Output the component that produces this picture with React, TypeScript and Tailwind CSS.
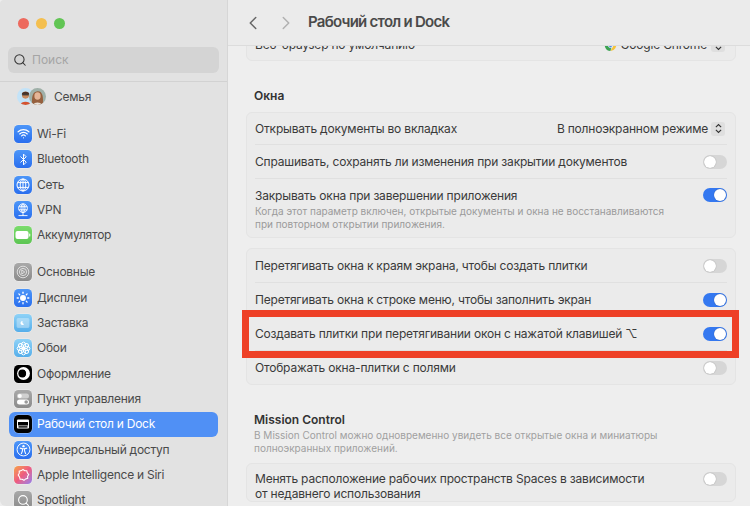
import { FC, ReactNode } from "react";
import { Bluetooth, ChevronLeft, ChevronRight, Search, Sun, Wifi } from "lucide-react";

const font = "font-['Inter','Noto_Sans',sans-serif]";

const Tile: FC<{ className: string; children: ReactNode }> = ({ className, children }) => (
  <div className={`flex h-[18px] w-[18px] shrink-0 items-center justify-center rounded-[4.5px] text-white shadow-[0_0_0_0.5px_rgba(255,255,255,0.45)] ${className}`}>
    {children}
  </div>
);

const blue = "bg-gradient-to-b from-[#4d96f8] to-[#2a6eee]";
const gray = "bg-gradient-to-b from-[#a9a9a9] to-[#8b8b8b]";
const sky = "bg-gradient-to-b from-[#8ed2f7] to-[#55aeea]";

const GlobeIcon = () => (
  <svg viewBox="0 0 14 14" className="h-[14px] w-[14px]" fill="none" stroke="currentColor" strokeWidth="1">
    <circle cx="7" cy="7" r="6" />
    <ellipse cx="7" cy="7" rx="2.8" ry="6" />
    <path d="M1.5 4.6h11M1.5 9.4h11M7 1v12" />
  </svg>
);

const VpnIcon = () => (
  <svg viewBox="0 0 14 14" className="h-[14px] w-[14px]" fill="none" stroke="currentColor" strokeWidth="0.9">
    <circle cx="7" cy="5.2" r="4.4" />
    <ellipse cx="7" cy="5.2" rx="2" ry="4.4" />
    <path d="M2.8 3.7h8.4M2.8 6.8h8.4M7 1v12M2.5 12.6h9" />
  </svg>
);

const BatteryIcon = () => (
  <svg viewBox="0 0 16 10" className="h-[10px] w-[16px]">
    <rect x="0.5" y="1" width="13" height="8" rx="2" fill="#fff" />
    <rect x="14" y="3.5" width="1.3" height="3" rx="0.6" fill="#fff" opacity="0.8" />
  </svg>
);

const GearIcon = () => (
  <svg viewBox="0 0 14 14" className="h-[14px] w-[14px]" fill="none" stroke="#e4e4e4" strokeWidth="0.9">
    <circle cx="7" cy="7" r="5.8" />
    <circle cx="7" cy="7" r="3.6" />
    <path d="M5.8 5l3 2-3 2z" />
  </svg>
);

const ScreensaverIcon = () => (
  <svg viewBox="0 0 14 14" className="h-[14px] w-[14px]" fill="none">
    <rect x="1" y="2.5" width="12" height="9" rx="1" fill="#ffffff" opacity="0.35" stroke="#fff" strokeWidth="0.8" />
    <path d="M6.6 5a2 2 0 1 0 1.6 3.1A2.4 2.4 0 0 1 6.6 5z" fill="#fff" />
  </svg>
);

const FlowerIcon = () => (
  <svg viewBox="0 0 14 14" className="h-[15px] w-[15px]" fill="none" stroke="currentColor" strokeWidth="0.9">
    <ellipse cx="7" cy="3.8" rx="2" ry="2.8" />
    <ellipse cx="7" cy="10.2" rx="2" ry="2.8" />
    <ellipse cx="3.8" cy="7" rx="2.8" ry="2" />
    <ellipse cx="10.2" cy="7" rx="2.8" ry="2" />
    <ellipse cx="4.7" cy="4.7" rx="2" ry="2.6" transform="rotate(-45 4.7 4.7)" />
    <ellipse cx="9.3" cy="9.3" rx="2" ry="2.6" transform="rotate(-45 9.3 9.3)" />
    <ellipse cx="9.3" cy="4.7" rx="2" ry="2.6" transform="rotate(45 9.3 4.7)" />
    <ellipse cx="4.7" cy="9.3" rx="2" ry="2.6" transform="rotate(45 4.7 9.3)" />
  </svg>
);

const AppearanceIcon = () => (
  <svg viewBox="0 0 14 14" className="h-[15px] w-[15px]">
    <circle cx="7" cy="7" r="6" fill="#fff" />
    <circle cx="6" cy="7" r="3.8" fill="#000" />
    <path d="M7.2 2.8c1.6 1.2 2.3 2.600 2.300 4.200s-.7 3-2.300 4.200a4.300 4.300 0 0 0 0-8.400z" fill="#fff" />
  </svg>
);

const ControlIcon = () => (
  <svg viewBox="0 0 14 14" className="h-[14px] w-[14px]">
    <rect x="1" y="1.5" width="12" height="5" rx="2.5" fill="#fff" opacity="0.5" />
    <circle cx="3.8" cy="4" r="2" fill="#fff" />
    <rect x="1" y="7.5" width="12" height="5" rx="2.5" fill="#fff" />
    <circle cx="10.2" cy="10" r="1.8" fill="#9a9a9a" />
  </svg>
);

const DockIcon = () => (
  <svg viewBox="0 0 14 14" className="h-[14px] w-[14px]">
    <rect x="1" y="2.5" width="12" height="9" rx="1" fill="#fff" />
    <rect x="2" y="5" width="10" height="3.5" fill="#000" />
    <rect x="2.5" y="9.2" width="9" height="1.4" fill="#000" />
  </svg>
);

const AccessIcon = () => (
  <svg viewBox="0 0 14 14" className="h-[15px] w-[15px]" fill="none" stroke="currentColor">
    <circle cx="7" cy="7" r="6" strokeWidth="0.9" />
    <circle cx="7" cy="3.9" r="1.1" fill="currentColor" stroke="none" />
    <path d="M3.6 5.700l2.400.6v2L4.900 11.200M10.400 5.700l-2.400.6v2l1.100 2.900M6 6.300h2" strokeWidth="1" />
  </svg>
);

const SiriIcon = () => (
  <svg viewBox="0 0 14 14" className="h-[14px] w-[14px]" fill="none" stroke="#fff" strokeWidth="1.1">
    <path d="M7 1.500l1.700 1.300 2.100-.1.500 2.100 1.400 1.700-1.100 1.800.1 2.100-2.100.5-1.600 1.400-1.800-1.100-2.100.1-.5-2.100L2.200 7l1.100-1.800-.1-2.100 2.100-.5z" />
  </svg>
);

const ChromeIcon = () => (
  <svg viewBox="0 0 14 14" className="h-[13px] w-[13px]">
    <path d="M7 1a6 6 0 0 1 5.200 3H7a3 3 0 0 0-2.800 1.800L2.300 3.200A6 6 0 0 1 7 1z" fill="#e0493c" />
    <path d="M12.200 4a6 6 0 0 1-5.400 9l2.700-4.300A3 3 0 0 0 9.400 5z" fill="#f5c33b" />
    <path d="M2.300 3.200l2.600 4.500a3 3 0 0 0 3.300 1.300L6.800 13A6 6 0 0 1 2.300 3.200z" fill="#3da353" />
    <circle cx="7" cy="7" r="2.300" fill="#4a8af0" stroke="#fff" strokeWidth="0.7" />
  </svg>
);

const Avatars = () => (
  <div className="flex w-[29px] shrink-0 items-center">
    <svg viewBox="0 0 18 18" className="h-[17px] w-[17px] shrink-0 rounded-full">
      <rect width="18" height="18" fill="#c3e3f8" />
      <circle cx="9" cy="7.500" r="3.800" fill="#c98b60" />
      <path d="M5 6.500c.5-3 7.500-3.500 8 0z" fill="#4a3328" />
      <rect x="5.500" y="6.500" width="7" height="1.300" fill="#333" />
      <path d="M3.500 18c.5-4.500 10.500-4.500 11 0z" fill="#d5532f" />
    </svg>
    <svg viewBox="0 0 18 18" className="-ml-[5px] h-[17px] w-[17px] shrink-0 rounded-full">
      <rect width="18" height="18" fill="#9fb0a8" />
      <path d="M3.500 18c-1-8 0-14 5.500-14.500S15.500 10 14.500 18z" fill="#96603e" />
      <ellipse cx="9" cy="8.500" rx="3.300" ry="4" fill="#e5b597" />
      <path d="M4.500 18c1-3.500 8-3.500 9 0z" fill="#e8e2da" />
    </svg>
  </div>
);

const SidebarItem: FC<{ icon: ReactNode; label: string; active?: boolean }> = ({ icon, label, active }) => (
  <div
    className={`flex h-[25.3px] shrink-0 items-center gap-[5px] rounded-[6px] pl-[5px] text-[12px] tracking-[-0.25px] ${
      active ? "bg-[#5090f5] text-white" : "text-[#4a4a4a]"
    }`}
  >
    {icon}
    <span>{label}</span>
  </div>
);

const Toggle: FC<{ on?: boolean }> = ({ on }) => (
  <div
    className={`flex h-[14px] w-[24px] shrink-0 items-center rounded-full p-[1px] ${
      on ? "justify-end bg-[#3478f0]" : "justify-start bg-[#d6d6d6]"
    }`}
  >
    <div className="h-[12px] w-[12px] rounded-full bg-white shadow-[0_0_1px_rgba(0,0,0,0.4)]" />
  </div>
);

const Stepper = () => (
  <div className="mr-[2px] flex h-[14px] w-[14px] items-center justify-center rounded-[3px] bg-[#dfdfdf]">
    <svg viewBox="0 0 8 12" className="h-[11px] w-[7px]" fill="none" stroke="#333" strokeWidth="1.3">
      <path d="M1 4.500L4 1.500l3 3M1 7.500l3 3 3-3" />
    </svg>
  </div>
);

const Row: FC<{ height: string; children: ReactNode; last?: boolean }> = ({ height, children, last }) => (
  <div className={`${height} px-[8px]`}>
    <div className={`flex h-full items-center justify-between text-[12px] tracking-[-0.19px] text-[#3a3a3a] ${last ? "" : "border-b border-[#e0e0e0]"}`}>
      {children}
    </div>
  </div>
);

const Card: FC<{ className?: string; children: ReactNode }> = ({ className = "", children }) => (
  <div className={`rounded-[6px] border border-[#e4e4e4] bg-[#ebebeb] ${className}`}>{children}</div>
);

export default function App() {
  return (
    <div className={`flex h-[506px] w-[750px] overflow-hidden bg-[#eeeeee] ${font}`}>
      <aside className="flex h-full w-[228px] shrink-0 flex-col overflow-hidden rounded-bl-[6px] rounded-tl-[4px] border-r border-[#d6d6d6] bg-[#e2e2e2]">
        <div className="flex shrink-0 gap-[7px] pl-[18px] pt-[18px]">
          <div className="h-[11px] w-[11px] rounded-full bg-[#ed6a5e]" />
          <div className="h-[11px] w-[11px] rounded-full bg-[#f4bf4f]" />
          <div className="h-[11px] w-[11px] rounded-full bg-[#61c554]" />
        </div>
        <div className="mx-[8px] mt-[18px] flex h-[26px] shrink-0 items-center gap-[5px] rounded-[6px] bg-[#d4d4d4] pl-[5px] text-[12px] text-[#a5a5a5]">
          <Search size={14} strokeWidth={1.8} className="text-[#333]" />
          <span>Поиск</span>
        </div>
        <div className="mt-[8px] shrink-0 border-b border-[#d2d2d2]" />
        <div className="flex shrink-0 flex-col px-[9px]">
          <div className="mt-[2px] flex h-[25.3px] items-center gap-[8px] pl-[8px] text-[12px] tracking-[-0.25px] text-[#4a4a4a]">
            <Avatars />
            <span>Семья</span>
          </div>
          <div className="mt-[12px] flex flex-col">
            <SidebarItem icon={<Tile className={blue}><Wifi size={13} strokeWidth={2.2} /></Tile>} label="Wi-Fi" />
            <SidebarItem icon={<Tile className={blue}><Bluetooth size={13} strokeWidth={1.8} /></Tile>} label="Bluetooth" />
            <SidebarItem icon={<Tile className={blue}><GlobeIcon /></Tile>} label="Сеть" />
            <SidebarItem icon={<Tile className={blue}><VpnIcon /></Tile>} label="VPN" />
            <SidebarItem icon={<Tile className="bg-gradient-to-b from-[#7bdc6c] to-[#5cc552]"><BatteryIcon /></Tile>} label="Аккумулятор" />
          </div>
          <div className="mt-[12px] flex flex-col">
            <SidebarItem icon={<Tile className={gray}><GearIcon /></Tile>} label="Основные" />
            <SidebarItem icon={<Tile className={blue}><Sun size={14} strokeWidth={2.2} fill="currentColor" /></Tile>} label="Дисплеи" />
            <SidebarItem icon={<Tile className={sky}><ScreensaverIcon /></Tile>} label="Заставка" />
            <SidebarItem icon={<Tile className={sky}><FlowerIcon /></Tile>} label="Обои" />
            <SidebarItem icon={<Tile className="bg-black"><AppearanceIcon /></Tile>} label="Оформление" />
            <SidebarItem icon={<Tile className={gray}><ControlIcon /></Tile>} label="Пункт управления" />
            <SidebarItem active icon={<Tile className="bg-black"><DockIcon /></Tile>} label="Рабочий стол и Dock" />
            <SidebarItem icon={<Tile className={blue}><AccessIcon /></Tile>} label="Универсальный доступ" />
            <SidebarItem icon={<Tile className="bg-gradient-to-br from-[#f6a13c] via-[#ee5a7f] to-[#8f7bf0]"><SiriIcon /></Tile>} label="Apple Intelligence и Siri" />
            <SidebarItem icon={<Tile className={gray}><Search size={13} strokeWidth={2} /></Tile>} label="Spotlight" />
          </div>
        </div>
      </aside>

      <main className="relative h-full min-w-0 flex-1 overflow-hidden">
        <header className="absolute inset-x-0 top-0 z-10 flex h-[46px] items-center border-b border-[#dcdcdc] bg-[#ebebeb]">
          <ChevronLeft size={22} strokeWidth={1.6} className="ml-[14px] text-[#666]" />
          <ChevronRight size={22} strokeWidth={1.6} className="ml-[11px] text-[#b0b0b0]" />
          <span className="ml-[11px] text-[15px] font-semibold tracking-[-0.75px] text-[#4a4a4a]">Рабочий стол и Dock</span>
        </header>

        <div className="pl-[18px] pr-[14px] pt-[29px]">
          <Card>
            <Row height="h-[30px]" last>
              <span>Веб-браузер по умолчанию</span>
              <div className="flex items-center gap-[4px]">
                <ChromeIcon />
                <span>Google Chrome</span>
                <Stepper />
              </div>
            </Row>
          </Card>

          <h2 className="ml-[8px] mt-[26px] text-[12px] font-semibold leading-[18px] text-[#333]">Окна</h2>
          <Card className="mt-[7px]">
            <Row height="h-[32px]">
              <span>Открывать документы во вкладках</span>
              <div className="flex items-center gap-[3px]">
                <span>В полноэкранном режиме</span>
                <Stepper />
              </div>
            </Row>
            <Row height="h-[34px]">
              <span>Спрашивать, сохранять ли изменения при закрытии документов</span>
              <Toggle />
            </Row>
            <div className="flex h-[58px] justify-between px-[8px] pt-[9px]">
              <div>
                <div className="text-[12px] leading-[16px] tracking-[-0.19px] text-[#3a3a3a]">Закрывать окна при завершении приложения</div>
                <div className="mt-[1px] text-[10px] leading-[13px] text-[#9a9a9a]">
                  Когда этот параметр включен, открытые документы и окна не восстанавливаются
                  <br />
                  при повторном открытии приложения.
                </div>
              </div>
              <Toggle on />
            </div>
          </Card>

          <div className="relative mt-[10px]">
            <Card>
              <Row height="h-[34px]">
                <span>Перетягивать окна к краям экрана, чтобы создать плитки</span>
                <Toggle />
              </Row>
              <Row height="h-[34px]">
                <span>Перетягивать окна к строке меню, чтобы заполнить экран</span>
                <Toggle on />
              </Row>
              <Row height="h-[34px]">
                <span>Создавать плитки при перетягивании окон с нажатой клавишей ⌥</span>
                <Toggle on />
              </Row>
              <Row height="h-[33px]" last>
                <span>Отображать окна-плитки с полями</span>
                <Toggle />
              </Row>
            </Card>
            <div className="absolute left-[-4px] top-[62px] h-[48px] w-[497px] border-[7px] border-[#ee4026]" />
          </div>

          <h2 className="ml-[8px] mt-[26px] text-[12px] font-semibold leading-[18px] text-[#333]">Mission Control</h2>
          <p className="ml-[8px] text-[10px] leading-[13px] text-[#a0a0a0]">
            В Mission Control можно одновременно увидеть все открытые окна и миниатюры
            <br />
            полноэкранных приложений.
          </p>
          <Card className="mt-[8px]">
            <div className="flex justify-between px-[8px] pt-[8px]">
              <div className="text-[12px] leading-[14.5px] tracking-[-0.19px] text-[#3a3a3a]">
                Менять расположение рабочих пространств Spaces в зависимости
                <br />
                от недавнего использования
              </div>
              <Toggle />
            </div>
          </Card>
        </div>
      </main>
    </div>
  );
}
